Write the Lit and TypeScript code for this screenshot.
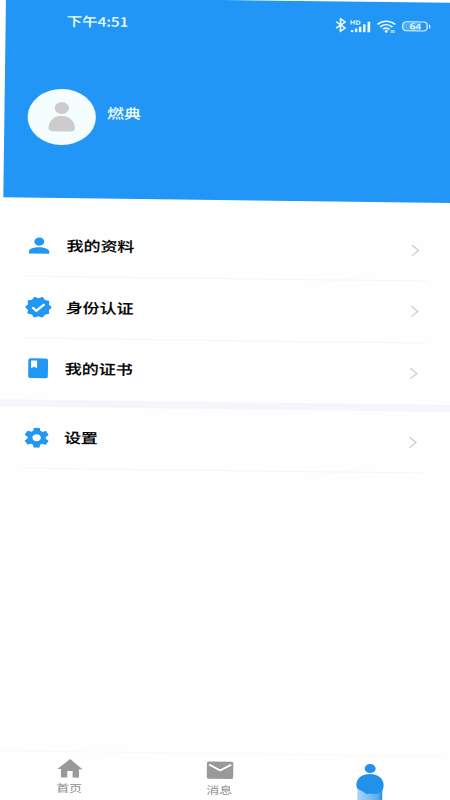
import { LitElement, html, css, svg } from "lit";
import { customElement } from "lit/decorators.js";

const person = svg`<svg class="ic" viewBox="0 0 24 24"><circle cx="12" cy="7" r="4.900"/><path d="M2 21.400v-2.200C2 15.500 7.500 13.900 12 13.900s10 1.600 10 5.300v2.200z"/></svg>`;
const verified = svg`<svg class="ic big" viewBox="1 1.500 22 21"><path d="M23 12l-2.44-2.79.34-3.69-3.61-.82-1.89-3.2L12 2.960 8.600 1.500 6.710 4.690 3.100 5.500l.34 3.700L1 12l2.440 2.790-.34 3.700 3.610.82L8.600 22.500l3.400-1.470 3.400 1.460 1.890-3.190 3.610-.82-.34-3.690L23 12z"/><path d="M7 12.200l3.300 3.300 6.600-6.600" fill="none" stroke="#fff" stroke-width="2"/></svg>`;
const book = svg`<svg class="ic book" viewBox="0 0 20 24"><rect x="1.400" y="1.600" width="17" height="20.800" rx="1.800"/><path d="M3.800 3.800h5.200v8.200L6.400 10.400 3.800 12z" fill="#fff"/></svg>`;
const gear = svg`<svg class="ic" viewBox="2 2 20 20"><path d="M19.43 12.98c.04-.32.07-.64.07-.98s-.03-.66-.07-.98l2.11-1.65c.19-.15.24-.42.12-.64l-2-3.46c-.12-.22-.39-.3-.61-.22l-2.49 1c-.52-.4-1.08-.73-1.69-.98l-.38-2.65C14.46 2.18 14.25 2 14 2h-4c-.25 0-.46.18-.49.42l-.38 2.65c-.61.25-1.17.59-1.69.98l-2.49-1c-.23-.09-.49 0-.61.22l-2 3.46c-.13.22-.07.49.12.64l2.11 1.65c-.04.32-.07.65-.07.98s.03.66.07.98l-2.11 1.65c-.19.15-.24.42-.12.64l2 3.46c.12.22.39.3.61.22l2.49-1c.52.4 1.08.73 1.69.98l.38 2.65c.03.24.24.42.49.42h4c.25 0 .46-.18.49-.42l.38-2.65c.61-.25 1.17-.59 1.69-.98l2.49 1c.23.09.49 0 .61-.22l2-3.46c.12-.22.07-.49-.12-.64l-2.11-1.65zM12 15.5c-1.93 0-3.5-1.57-3.5-3.5s1.57-3.5 3.5-3.5 3.5 1.57 3.5 3.5-1.57 3.5-3.5 3.5z"/></svg>`;

@customElement("app-root")
export class AppRoot extends LitElement {
  static styles = css`
    :host {
      display: block;
      height: 800px;
      overflow: hidden;
      background: #fefefe;
      font-family: "Noto Sans CJK SC", "Noto Sans", sans-serif;
    }
    .stage {
      width: 374px;
      height: 812px;
      display: flex;
      flex-direction: column;
      transform-origin: 0 0;
      transform: matrix(1.22, 0.01525, -0.0135, 1, 6, -2.7);
    }
    .header {
      height: 199.6px;
      flex: none;
      background: #2196f6;
      color: #f0fdff;
    }
    .status {
      height: 47px;
      display: flex;
      align-items: center;
      padding-left: 50px;
    }
    .time {
      width: 219.7px;
      font-size: 12.8px;
      font-weight: 500;
      letter-spacing: -0.15px;
      line-height: 16px;
      padding-bottom: 1px;
    }
    .status svg {
      display: block;
      flex: none;
    }
    .bt { width: 9.6px; height: 15px; margin-right: 3.2px; }
    .sig { width: 18px; height: 14px; margin-right: 4px; }
    .wifi { width: 16px; height: 14px; margin-right: 4.8px; }
    .battery {
      width: 19px;
      height: 8.6px;
      border: 1.1px solid #e8fbff;
      border-radius: 3.5px;
      margin-top: 1px;
      font: 600 8.4px/8.8px "Noto Sans", sans-serif;
      text-align: center;
      background: linear-gradient(90deg, #4fabf8 62%, transparent 62%);
    }
    .tip { width: 1.2px; height: 4px; background: #e8fbff; margin-left: 0.7px; border-radius: 1px; }
    .profile {
      display: flex;
      align-items: center;
      padding: 43.6px 0 0 18.9px;
    }
    .avatar {
      width: 56px;
      height: 56px;
      border-radius: 50%;
      background: #f5fdfe;
      margin-right: 9.3px;
    }
    .avatar svg { display: block; width: 56px; height: 56px; }
    .name {
      font-size: 13.8px;
      font-weight: 500;
      line-height: 20px;
      padding-bottom: 9.4px;
    }
    .list { padding: 18px 26px 0 19.4px; }
    .list.second { padding-top: 0; }
    .row {
      height: 61.5px;
      box-sizing: border-box;
      display: flex;
      align-items: center;
      border-bottom: 1px solid #f5f5f6;
    }
    .row.last { border-bottom-color: transparent; }
    .slot { width: 22px; display: flex; justify-content: center; }
    .ic { width: 20px; height: 20px; fill: #2196f3; display: block; }
    .ic.big { width: 22px; height: 21px; flex: none; }
    .ic.book { width: 19px; height: 23px; }
    .label {
      flex: 1;
      margin-left: 11px;
      color: #020202;
      font-size: 13.9px;
      font-weight: 500;
      line-height: 20px;
      padding-bottom: 1px;
      -webkit-text-stroke: 0.15px #020202;
    }
    .chev { width: 7px; height: 12px; margin-right: 6px; display: block; }
    .band { height: 7.3px; flex: none; margin: 0 -2px; background: #f5f5fb; }
    .spacer { flex: 1; }
    .nav {
      height: 59.5px;
      flex: none;
      width: 369px;
      margin-left: -1px;
      display: grid;
      grid-template-columns: repeat(3, 1fr);
      border-top: 1px solid #f9f9f9;
      box-sizing: border-box;
    }
    .tab {
      display: flex;
      flex-direction: column;
      align-items: center;
      padding-top: 6px;
      color: #8e8e8e;
      font-size: 10.6px;
      line-height: 16px;
    }
    .tab svg { display: block; width: 22px; height: 20px; margin-bottom: 2.8px; fill: #999; }
    .tab svg.me { width: 24px; height: 44px; }
  `;

  private row(icon: unknown, label: string, last = false) {
    return html`<div class="row ${last ? "last" : ""}">
      <div class="slot">${icon}</div>
      <div class="label">${label}</div>
      <svg class="chev" viewBox="0 0 7 12"><path d="M.6 .8L6 6 .6 11.2" fill="none" stroke="#cfcfd3" stroke-width="1.2"/></svg>
    </div>`;
  }

  render() {
    return html`<div class="stage">
      <div class="header">
        <div class="status">
          <div class="time">下午4:51</div>
          <svg class="bt" viewBox="0 0 9 14"><path d="M.8 4l7 5.8-3.6 3V1.2l3.6 3-7 5.8" fill="none" stroke="#e8fbff" stroke-width="1.3"/></svg>
          <svg class="sig" viewBox="0 0 18 14"><g fill="#e8fbff"><rect x="1" y="11.5" width="2" height="2"/><rect x="4.3" y="9.8" width="2" height="3.7"/><rect x="7.6" y="8" width="2" height="5.5"/><rect x="11" y="5.5" width="2" height="8"/><rect x="14.6" y="3" width="2.2" height="10.5"/></g><text x="0" y="6" font-size="6" font-weight="700" font-family="Noto Sans" fill="#e8fbff">HD</text></svg>
          <svg class="wifi" viewBox="0 0 16 14"><g fill="none" stroke="#e8fbff" stroke-width="1.5"><path d="M.7 5.4C5 1 11 1 15.3 5.4M3 8c3-3 7-3 10 0M5.3 10.3c1.7-1.6 3.7-1.6 5.4 0"/></g><circle cx="8" cy="12.3" r="1.3" fill="#e8fbff"/><path d="M11.500 11.700h3.500M11.500 13h3.500" stroke="#e8fbff" stroke-width=".8"/></svg>
          <div class="battery">64</div><div class="tip"></div>
        </div>
        <div class="profile">
          <div class="avatar"><svg viewBox="0 0 56 56" fill="#ccc"><circle cx="28" cy="19" r="5.9"/><path d="M17.3 38.500c0-7 5-11.800 10.700-11.800s10.900 4.800 10.900 11.800c0 2.500-1 3.800-3 3.800H20.300c-2 0-3-1.300-3-3.800z"/></svg></div>
          <div class="name">燃典</div>
        </div>
      </div>
      <div class="list">
        ${this.row(person, "我的资料")}
        ${this.row(verified, "身份认证")}
        ${this.row(book, "我的证书", true)}
      </div>
      <div class="band"></div>
      <div class="list second">${this.row(gear, "设置")}</div>
      <div class="spacer"></div>
      <div class="nav">
        <div class="tab"><svg viewBox="0 0 22 20"><path d="M11 .8L.6 11h3v8.300h5.200v-6.500h4.400v6.500h5.200V11h3z"/></svg>首页</div>
        <div class="tab"><svg viewBox="0 0 22 20"><rect x="0" y="1.5" width="22" height="17.3" rx="1.8"/><path d="M2 4.500l9 5.800 9-5.800" fill="none" stroke="#fff" stroke-width="1.8"/></svg>消息</div>
        <div class="tab"><svg class="me" viewBox="0 0 24 44">
          <defs><linearGradient id="g" x1="0" y1="0" x2="1" y2="0"><stop offset="0" stop-color="#a9d5f7"/><stop offset=".8" stop-color="#5fb0ef"/><stop offset="1" stop-color="#2b8ddf"/></linearGradient></defs>
          <circle cx="12" cy="6.600" r="4.500" fill="#2191ea"/>
          <path d="M1.800 24h20.400v20H1.800z" fill="url(#g)"/>
          <path d="M.8 23C.8 16 6 12 12 12s11.200 4 11.200 11c0 3-.6 5-1.800 6L19 31.500l-3 .5-4-.6-2.500 1-4-3.400C2.500 28 .8 26.500 .8 23z" fill="#2191ea"/></svg></div>
      </div>
    </div>`;
  }
}
